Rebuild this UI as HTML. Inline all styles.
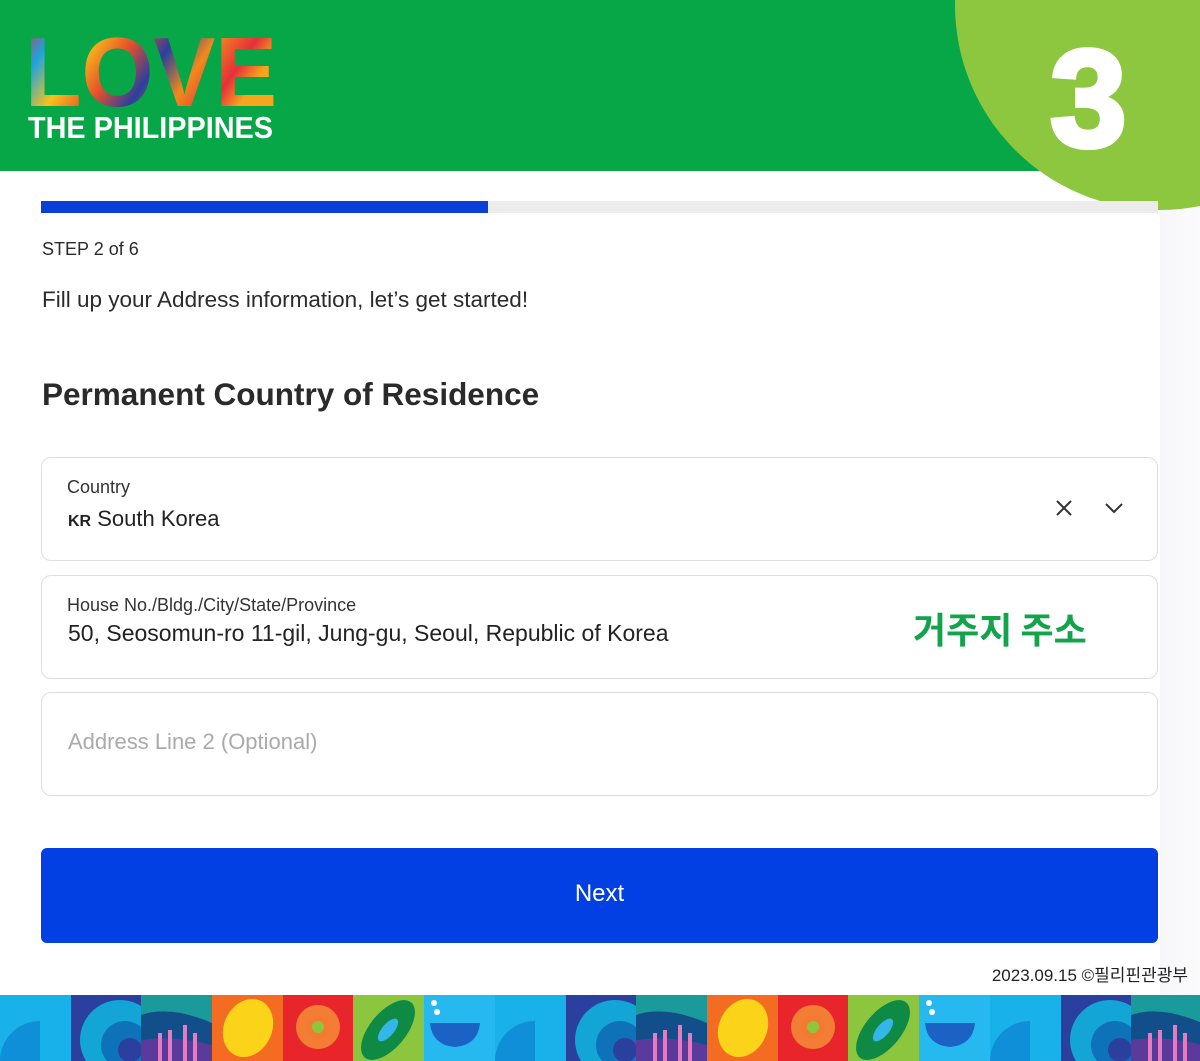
<!DOCTYPE html>
<html><head><meta charset="utf-8"><style>
*{margin:0;padding:0;box-sizing:border-box}
body{width:1200px;height:1061px;position:relative;overflow:hidden;background:#fff;font-family:"Liberation Sans","Noto Sans CJK KR",sans-serif;color:#2b2b2b}
.hdr{position:absolute;left:0;top:0;width:1200px;height:171px;background:#07a647}
.circ{position:absolute;left:955px;top:-200px;width:410px;height:410px;border-radius:50%;background:#8dc63f}
.three{position:absolute;left:1050px;top:30px;font:bold 138px "Liberation Sans",sans-serif;color:#fff;line-height:1;-webkit-text-stroke:5px #fff}
.side{position:absolute;left:1160px;top:171px;width:40px;height:824px;background:linear-gradient(90deg,#f7f7f9,#fbfbfc)}
.bar{position:absolute;left:41px;top:201px;width:1117px;height:12px;background:#ececec}
.bar i{position:absolute;left:0;top:0;width:447px;height:12px;background:#0a3fd9}
.t{position:absolute;left:42px;white-space:nowrap}
.box{position:absolute;left:41px;width:1117px;height:104px;border:1px solid #dedede;border-radius:10px;background:#fff}
.lbl{position:absolute;left:25px;top:19px;font-size:18px;color:#333}
.val{position:absolute;left:26px;font-size:21px;color:#222}
.btn{position:absolute;left:41px;top:848px;width:1117px;height:95px;background:#0340e3;border-radius:6px;color:#fff;font-size:24px;text-align:center;line-height:92px}
.foot{position:absolute;left:0;top:995px;width:1200px;height:66px}
</style></head><body>
<div class="hdr"></div>
<svg style="position:absolute;left:0;top:0" width="300" height="171">
<defs><linearGradient id="g" x1="0" x2="1" y1="0" y2="0.3">
<stop offset="0" stop-color="#e52b2b"/><stop offset=".15" stop-color="#1fa3e0"/><stop offset=".3" stop-color="#f7c21a"/><stop offset=".45" stop-color="#e8502a"/><stop offset=".6" stop-color="#2a3f9e"/><stop offset=".75" stop-color="#f08a1c"/><stop offset=".9" stop-color="#e5303a"/><stop offset="1" stop-color="#f6a51c"/></linearGradient></defs>
<text x="25" y="106" font-family="Liberation Sans" font-weight="bold" font-size="98" fill="url(#g)" textLength="252" lengthAdjust="spacingAndGlyphs">LOVE</text>
<text x="28" y="138" font-family="Liberation Sans" font-weight="bold" font-size="31" fill="#fff" textLength="245" lengthAdjust="spacingAndGlyphs">THE PHILIPPINES</text>
</svg>
<div class="side"></div>
<div class="circ"></div>
<div class="three">3</div>
<div class="bar"><i></i></div>
<div class="t" style="top:239px;font-size:18px">STEP 2 of 6</div>
<div class="t" style="top:287px;font-size:22.5px">Fill up your Address information, let’s get started!</div>
<div class="t" style="top:376px;font-size:31.5px;font-weight:bold;color:#2a2a2a">Permanent Country of Residence</div>
<div class="box" style="top:457px"><div class="lbl">Country</div><div class="val" style="top:48px;font-size:22px"><b style="font-size:16px">KR</b> South Korea</div>
<svg style="position:absolute;left:1012px;top:40px" width="80" height="20"><path d="M3 3L17 17M17 3L3 17" stroke="#333" stroke-width="2"/><path d="M52 6L60 14L68 6" stroke="#333" stroke-width="2" fill="none"/></svg></div>
<div class="box" style="top:575px"><div class="lbl">House No./Bldg./City/State/Province</div><div class="val" style="top:44px;font-size:23px">50, Seosomun-ro 11-gil, Jung-gu, Seoul, Republic of Korea</div>
<div style="position:absolute;left:871px;top:26px;font:bold 36px 'Noto Sans CJK KR',sans-serif;color:#12a34b">거주지 주소</div></div>
<div class="box" style="top:692px"><div class="val" style="top:36px;color:#aaa;font-size:22px">Address Line 2 (Optional)</div></div>
<div class="btn">Next</div>
<div style="position:absolute;right:12px;top:961px;font-size:17px;color:#222">2023.09.15 ©필리핀관광부</div>
<svg class="foot" width="1200" height="66">
<defs><g id="p">
<rect x="0" width="71" height="66" fill="#19b1ea"/><path d="M0 66A40 40 0 0 1 40 26V66Z" fill="#0e8fd8"/>
<rect x="71" width="71" height="66" fill="#2a3f9e"/><circle cx="120" cy="45" r="40" fill="#12a5d6"/><circle cx="125" cy="50" r="24" fill="#0d72b8"/><circle cx="130" cy="55" r="12" fill="#2a3f9e"/>
<rect x="141" width="71" height="66" fill="#1a9a9b"/><path d="M141 20Q170 10 212 28V66H141Z" fill="#124f8a"/><path d="M141 45Q175 40 212 50V66H141Z" fill="#5a3a9a"/><path d="M160 66V38M170 66V35M185 66V30M195 66V38" stroke="#e77ac0" stroke-width="4"/>
<rect x="212" width="71" height="66" fill="#f36c21"/><ellipse cx="248" cy="33" rx="24" ry="30" transform="rotate(25 248 33)" fill="#fbd41a"/>
<rect x="283" width="71" height="66" fill="#e8252a"/><circle cx="318" cy="32" r="22" fill="#f9a33a" opacity=".7"/><circle cx="318" cy="32" r="12" fill="#f47a32"/><circle cx="318" cy="32" r="6" fill="#8cc63f"/>
<rect x="353" width="71" height="66" fill="#8cc63f"/><ellipse cx="388" cy="35" rx="18" ry="36" transform="rotate(40 388 35)" fill="#0e8a44"/><ellipse cx="388" cy="35" rx="6" ry="14" transform="rotate(40 388 35)" fill="#35b6e8"/>
<rect x="424" width="71" height="66" fill="#26b9ef"/><path d="M430 28H480Q478 50 455 52Q432 50 430 28Z" fill="#1a62c4"/><circle cx="434" cy="8" r="3" fill="#fff"/><circle cx="437" cy="17" r="3" fill="#fff"/>
</g></defs>
<use href="#p"/><use href="#p" x="495"/><use href="#p" x="990"/>
</svg>
</body></html>
